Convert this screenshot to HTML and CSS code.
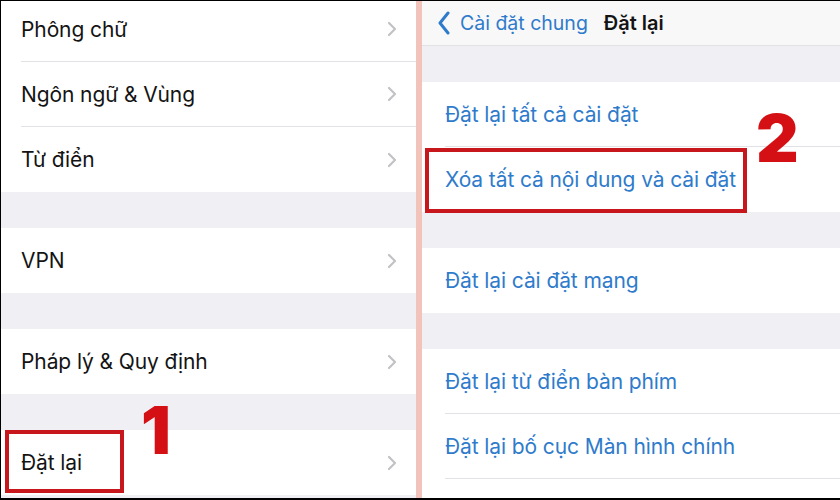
FILE: index.html
```html
<!DOCTYPE html>
<html lang="vi">
<head>
    <meta charset="UTF-8">
    <meta name="viewport" content="width=device-width, initial-scale=1.0">
    <title>Đặt lại</title>
    <link rel="stylesheet" href="styles.css">
</head>
<body>
    <div class="frame">
        <!-- Left: general settings list -->
        <div class="panel panel-left">
            <div class="group group-first">
                <div class="row">
                    <span class="label">Phông chữ</span>
                    <svg class="chevron" viewBox="0 0 10 16"><polyline points="2,2 8,8 2,14"/></svg>
                </div>
                <div class="row">
                    <span class="label">Ngôn ngữ &amp; Vùng</span>
                    <svg class="chevron" viewBox="0 0 10 16"><polyline points="2,2 8,8 2,14"/></svg>
                </div>
                <div class="row last">
                    <span class="label">Từ điển</span>
                    <svg class="chevron" viewBox="0 0 10 16"><polyline points="2,2 8,8 2,14"/></svg>
                </div>
            </div>
            <div class="gap"></div>
            <div class="group">
                <div class="row last">
                    <span class="label">VPN</span>
                    <svg class="chevron" viewBox="0 0 10 16"><polyline points="2,2 8,8 2,14"/></svg>
                </div>
            </div>
            <div class="gap"></div>
            <div class="group">
                <div class="row last">
                    <span class="label">Pháp lý &amp; Quy định</span>
                    <svg class="chevron" viewBox="0 0 10 16"><polyline points="2,2 8,8 2,14"/></svg>
                </div>
            </div>
            <div class="gap"></div>
            <div class="group">
                <div class="row last">
                    <span class="label">Đặt lại</span>
                    <svg class="chevron" viewBox="0 0 10 16"><polyline points="2,2 8,8 2,14"/></svg>
                </div>
            </div>

            <div class="mark mark-one"></div>
            <span class="step step-one">1</span>
        </div>

        <div class="divider"></div>

        <!-- Right: reset screen -->
        <div class="panel panel-right">
            <div class="navbar">
                <svg class="back" viewBox="0 0 14 24"><polyline points="11,2 3,12 11,22"/></svg>
                <span class="back-text">Cài đặt chung</span>
                <span class="nav-title">Đặt lại</span>
            </div>
            <div class="gap"></div>
            <div class="group">
                <div class="row action">
                    <span class="label">Đặt lại tất cả cài đặt</span>
                </div>
                <div class="row action last">
                    <span class="label">Xóa tất cả nội dung và cài đặt</span>
                </div>
            </div>
            <div class="gap"></div>
            <div class="group">
                <div class="row action last">
                    <span class="label">Đặt lại cài đặt mạng</span>
                </div>
            </div>
            <div class="gap"></div>
            <div class="group">
                <div class="row action">
                    <span class="label">Đặt lại từ điển bàn phím</span>
                </div>
                <div class="row action">
                    <span class="label">Đặt lại bố cục Màn hình chính</span>
                </div>
                <div class="row action last"></div>
            </div>

            <div class="mark mark-two"></div>
            <span class="step step-two">2</span>
        </div>
    </div>
</body>
</html>
```

FILE: styles.css
```css
:root {
    --bg-color: #efeff4;
    --row-bg: #fff;
    --nav-bg: #f8f8f8;
    --sep-color: #e2e2e6;
    --text-color: #141414;
    --link-color: #2f7bcb;
    --chevron-color: #c2c2c6;
    --mark-color: #c8161d;
    --step-color: #d51015;
    --divider-color: #f1c3bb;
}

* {
    box-sizing: border-box;
}

body {
    margin: 0;
    width: 840px;
    height: 500px;
    overflow: hidden;
    font-family: Inter, "Noto Sans", sans-serif;
    background-color: #fff;
}

.frame {
    display: flex;
    height: 500px;
    border-top: 1px solid #000;
    border-left: 1px solid #000;
    border-bottom: 2px solid #000;
    overflow: hidden;
}

.panel {
    position: relative;
    background-color: var(--bg-color);
    overflow: hidden;
}

.panel-left {
    width: 415px;
}

.panel-right {
    flex: 1;
}

.divider {
    width: 6px;
    background-color: var(--divider-color);
}

.group {
    background-color: var(--row-bg);
}

.group-first {
    margin-top: -4px;
}

.gap {
    height: 36px;
}

.row {
    display: flex;
    align-items: center;
    justify-content: space-between;
    height: 65px;
    margin-left: 20px;
    padding-right: 19px;
    border-bottom: 1px solid var(--sep-color);
}

.row.last {
    border-bottom: none;
}

.label {
    font-size: 21px;
    color: var(--text-color);
    letter-spacing: -0.1px;
}

.action {
    margin-left: 23px;
}

.action .label {
    color: var(--link-color);
}

.chevron {
    width: 10px;
    height: 16px;
    fill: none;
    stroke: var(--chevron-color);
    stroke-width: 2.2;
    stroke-linecap: round;
    stroke-linejoin: round;
}

.navbar {
    display: flex;
    align-items: center;
    height: 45px;
    padding-left: 15px;
    background-color: var(--nav-bg);
    border-bottom: 1px solid var(--sep-color);
}

.back {
    width: 14px;
    height: 24px;
    margin-right: 9px;
    fill: none;
    stroke: var(--link-color);
    stroke-width: 3;
    stroke-linecap: round;
    stroke-linejoin: round;
}

.back-text {
    font-size: 19.5px;
    color: var(--link-color);
    margin-right: 16px;
}

.nav-title {
    font-size: 20px;
    font-weight: 600;
    color: var(--text-color);
}

/* annotations drawn over the screenshot */
.mark {
    position: absolute;
    border: 4px solid var(--mark-color);
}

.mark-one {
    left: 4px;
    top: 429px;
    width: 119px;
    height: 63px;
}

.mark-two {
    left: 3px;
    top: 147px;
    width: 322px;
    height: 65px;
}

.step {
    position: absolute;
    font-family: Inter, "Liberation Sans", sans-serif;
    font-weight: 900;
    font-size: 66px;
    line-height: 1;
    color: var(--step-color);
}

.step-one {
    left: 140px;
    top: 396px;
}

.step-two {
    left: 334px;
    top: 104px;
}
```
